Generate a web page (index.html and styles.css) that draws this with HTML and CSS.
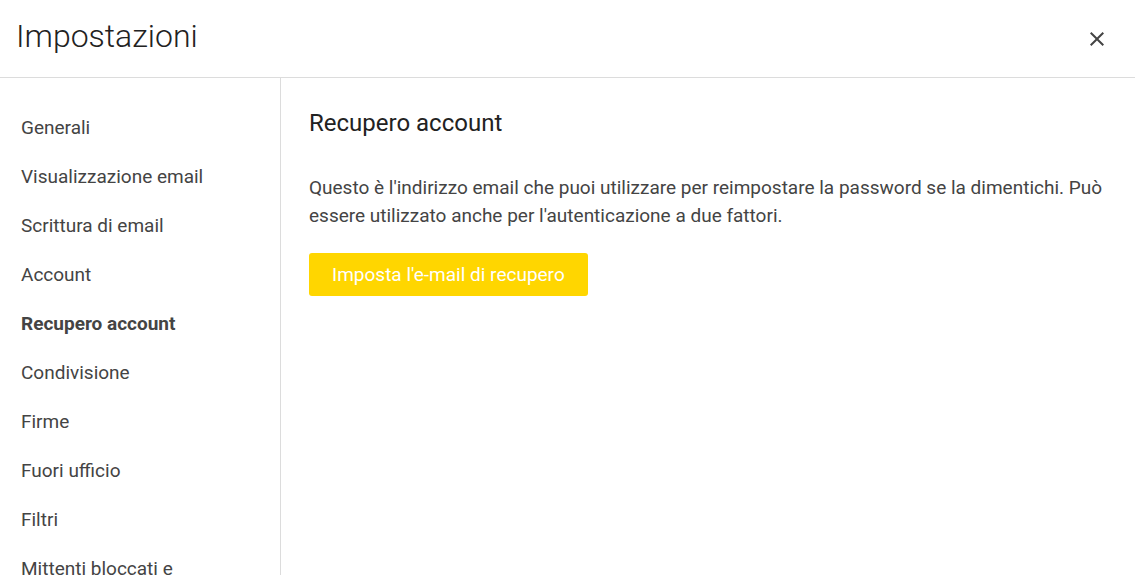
FILE: index.html
```html
<!DOCTYPE html>
<html lang="it">
<head>
<meta charset="utf-8">
<title>Impostazioni</title>
<link rel="stylesheet" href="styles.css">
</head>
<body>
<div class="dialog">
  <header class="header">
    <h1 class="title">Impostazioni</h1>
    <button class="close" aria-label="Chiudi">
      <svg width="24" height="24" viewBox="0 0 24 24"><path d="M19 6.41 17.59 5 12 10.59 6.41 5 5 6.41 10.59 12 5 17.59 6.41 19 12 13.41 17.59 19 19 17.59 13.41 12z" fill="#444"/></svg>
    </button>
  </header>
  <div class="body">
    <nav class="sidebar">
      <a class="nav-item">Generali</a>
      <a class="nav-item">Visualizzazione email</a>
      <a class="nav-item">Scrittura di email</a>
      <a class="nav-item">Account</a>
      <a class="nav-item active">Recupero account</a>
      <a class="nav-item">Condivisione</a>
      <a class="nav-item">Firme</a>
      <a class="nav-item">Fuori ufficio</a>
      <a class="nav-item">Filtri</a>
      <a class="nav-item">Mittenti bloccati e</a>
    </nav>
    <main class="content">
      <h2 class="heading">Recupero account</h2>
      <p class="text">Questo è l'indirizzo email che puoi utilizzare per reimpostare la password se la dimentichi. Può essere utilizzato anche per l'autenticazione a due fattori.</p>
      <button class="primary">Imposta l'e-mail di recupero</button>
    </main>
  </div>
</div>
</body>
</html>
```
FILE: styles.css
```css
* { box-sizing: border-box; }
html, body { margin: 0; padding: 0; height: 100%; overflow: hidden; }
body {
  font-family: Roboto, "Liberation Sans", sans-serif;
  background: #fff;
  color: #333;
}
.dialog { display: flex; flex-direction: column; height: 575px; }
.header {
  height: 78px;
  flex: none;
  display: flex;
  align-items: center;
  justify-content: space-between;
  padding: 0 26px 0 16px;
  border-bottom: 1px solid #dcdcdc;
}
.title {
  margin: 0;
  font-size: 32px;
  font-weight: 300;
  color: #222;
  padding-bottom: 6px;
}
.close {
  border: 0;
  background: none;
  padding: 0;
  width: 24px;
  height: 24px;
  cursor: pointer;
  display: flex;
}
.body { flex: 1; display: flex; min-height: 0; }
.sidebar {
  width: 281px;
  flex: none;
  border-right: 1px solid #dcdcdc;
  padding: 25px 0 0 21px;
  display: flex;
  flex-direction: column;
  overflow: hidden;
}
.nav-item {
  display: block;
  font-size: 19px;
  line-height: 49px;
  height: 49px;
  flex: none;
  color: #444;
  white-space: nowrap;
}
.nav-item.active { font-weight: 700; color: #444; }
.content { flex: 1; padding: 29px 28px 0 28px; }
.heading {
  margin: 0;
  font-size: 24px;
  font-weight: 400;
  color: #222;
  line-height: 32px;
}
.text {
  margin: 35px 0 0 0;
  font-size: 19px;
  line-height: 28px;
  color: #444;
}
.primary {
  margin-top: 23px;
  height: 43px;
  padding: 0 23px;
  border: 0;
  border-radius: 3px;
  background: #ffd600;
  color: #fff;
  font-family: inherit;
  font-size: 19px;
  cursor: pointer;
}
```
